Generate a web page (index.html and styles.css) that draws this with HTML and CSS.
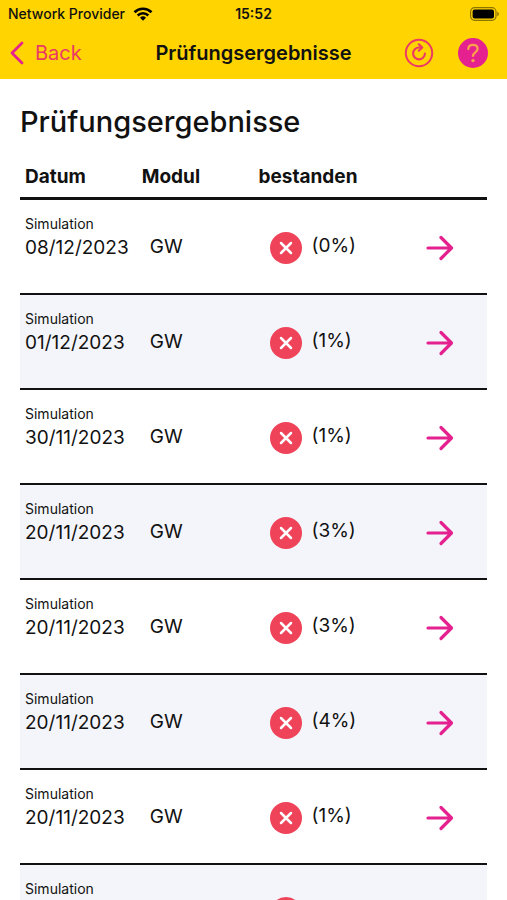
FILE: index.html
```html
<!DOCTYPE html>
<html lang="de">
<head>
    <meta charset="UTF-8">
    <meta name="viewport" content="width=device-width, initial-scale=1.0">
    <title>Prüfungsergebnisse</title>
    <link rel="stylesheet" href="styles.css">
</head>
<body>

    <svg class="sprite" aria-hidden="true">
        <symbol id="failed" viewBox="0 0 32 32">
            <circle cx="16" cy="16" r="16" fill="#ef4359"/>
            <path d="M11 11l10 10M21 11L11 21" stroke="#fff" stroke-width="2.5" stroke-linecap="round"/>
        </symbol>
        <symbol id="arrow" viewBox="0 0 28 26">
            <path d="M2 13h23M15 2.500l10.500 10.500-10.500 10.500" fill="none" stroke="#e4218f" stroke-width="3.200" stroke-linecap="round" stroke-linejoin="round"/>
        </symbol>
    </svg>

    <header>
        <div class="status-bar">
            <div class="carrier">
                <span>Network Provider</span>
                <svg width="20" height="14" viewBox="0 0 20 14" fill="none" stroke="#000">
                    <path d="M1.500 5.200a12.200 12.200 0 0 1 17 0" stroke-width="2.700"/>
                    <path d="M4.700 8.500a7.600 7.600 0 0 1 10.600 0" stroke-width="2.500"/>
                    <path d="M10 13.700L7 10.700a4.300 4.300 0 0 1 6 0z" fill="#000" stroke="none"/>
                </svg>
            </div>
            <div class="clock">15:52</div>
            <div class="battery">
                <svg width="30" height="14" viewBox="0 0 30 14">
                    <rect x="1.600" y="0.700" width="25.400" height="12.600" rx="4" fill="none" stroke="#000" stroke-opacity="0.450" stroke-width="1.200"/>
                    <rect x="3.600" y="2.600" width="21.400" height="8.800" rx="2"/>
                    <path d="M28.300 4.800v4.400q1.600-.8 1.600-2.200t-1.600-2.200z" fill-opacity="0.500"/>
                </svg>
            </div>
        </div>
        <nav class="nav-bar">
            <a class="back" href="#">
                <svg width="14" height="24" viewBox="0 0 14 24">
                    <path d="M12 2L2 12l10 10" fill="none" stroke="#e4218f" stroke-width="2.800" stroke-linecap="round" stroke-linejoin="round"/>
                </svg>
                <span>Back</span>
            </a>
            <div class="nav-title">Prüfungsergebnisse</div>
            <div class="actions">
                <button type="button" aria-label="Aktualisieren">
                    <svg width="30" height="30" viewBox="0 0 30 30" fill="none" stroke="#ec3a66" stroke-width="2">
                        <circle cx="15" cy="15" r="13.200"/>
                        <path d="M16 9.500h-1a5.900 5.900 0 1 0 5.900 6.200" stroke-width="2.200" stroke-linecap="round"/>
                        <path d="M14.800 6.300l3.400 3.200-3.400 3.200" stroke-width="2.200" stroke-linecap="round" stroke-linejoin="round"/>
                    </svg>
                </button>
                <button type="button" aria-label="Hilfe">
                    <svg width="30" height="30" viewBox="0 0 30 30">
                        <circle cx="15" cy="15" r="15" fill="#e4218f"/>
                        <path d="M10.300 11c.1-2.500 2-4.100 4.700-4.100s4.600 1.500 4.600 3.900c0 3.500-4.600 3.500-4.600 7.100" fill="none" stroke="#fb9f4a" stroke-width="2.300" stroke-linecap="round"/>
                        <circle cx="15" cy="22.600" r="1.700" fill="#fb9f4a"/>
                    </svg>
                </button>
            </div>
        </nav>
    </header>

    <main>
        <h1>Prüfungsergebnisse</h1>
        <table>
            <thead>
                <tr>
                    <th>Datum</th>
                    <th>Modul</th>
                    <th>bestanden</th>
                    <th></th>
                </tr>
            </thead>
            <tbody>
                <tr>
                    <td><small>Simulation</small>08/12/2023</td>
                    <td class="module">GW</td>
                    <td class="result"><div><svg><use href="#failed"/></svg><span>(0%)</span></div></td>
                    <td class="more"><a href="#" aria-label="Details"><svg><use href="#arrow"/></svg></a></td>
                </tr>
                <tr>
                    <td><small>Simulation</small>01/12/2023</td>
                    <td class="module">GW</td>
                    <td class="result"><div><svg><use href="#failed"/></svg><span>(1%)</span></div></td>
                    <td class="more"><a href="#" aria-label="Details"><svg><use href="#arrow"/></svg></a></td>
                </tr>
                <tr>
                    <td><small>Simulation</small>30/11/2023</td>
                    <td class="module">GW</td>
                    <td class="result"><div><svg><use href="#failed"/></svg><span>(1%)</span></div></td>
                    <td class="more"><a href="#" aria-label="Details"><svg><use href="#arrow"/></svg></a></td>
                </tr>
                <tr>
                    <td><small>Simulation</small>20/11/2023</td>
                    <td class="module">GW</td>
                    <td class="result"><div><svg><use href="#failed"/></svg><span>(3%)</span></div></td>
                    <td class="more"><a href="#" aria-label="Details"><svg><use href="#arrow"/></svg></a></td>
                </tr>
                <tr>
                    <td><small>Simulation</small>20/11/2023</td>
                    <td class="module">GW</td>
                    <td class="result"><div><svg><use href="#failed"/></svg><span>(3%)</span></div></td>
                    <td class="more"><a href="#" aria-label="Details"><svg><use href="#arrow"/></svg></a></td>
                </tr>
                <tr>
                    <td><small>Simulation</small>20/11/2023</td>
                    <td class="module">GW</td>
                    <td class="result"><div><svg><use href="#failed"/></svg><span>(4%)</span></div></td>
                    <td class="more"><a href="#" aria-label="Details"><svg><use href="#arrow"/></svg></a></td>
                </tr>
                <tr>
                    <td><small>Simulation</small>20/11/2023</td>
                    <td class="module">GW</td>
                    <td class="result"><div><svg><use href="#failed"/></svg><span>(1%)</span></div></td>
                    <td class="more"><a href="#" aria-label="Details"><svg><use href="#arrow"/></svg></a></td>
                </tr>
                <tr>
                    <td><small>Simulation</small></td>
                    <td class="module"></td>
                    <td class="result"><div><svg><use href="#failed"/></svg></div></td>
                    <td class="more"></td>
                </tr>
            </tbody>
        </table>
    </main>

</body>
</html>
```
FILE: styles.css
```css
* {
    box-sizing: border-box;
}
body {
    margin: 0;
    height: 100vh;
    display: flex;
    flex-direction: column;
    overflow: hidden;
    font-family: Inter, "Liberation Sans", sans-serif;
    font-size: 19px;
    color: #111;
    background-color: #fff;
}
svg {
    display: block;
    flex-shrink: 0;
}
.sprite {
    position: absolute;
    width: 0;
    height: 0;
}

/* Header */
header {
    flex-shrink: 0;
    background-color: #ffd400;
    color: #111;
}
.status-bar {
    display: grid;
    grid-template-columns: 1fr auto 1fr;
    align-items: center;
    height: 27px;
    padding: 0 8px;
    font-size: 14px;
    font-weight: 500;
}
.carrier {
    display: flex;
    align-items: center;
    gap: 8px;
}
.clock {
    font-weight: 600;
}
.battery {
    justify-self: end;
}
.nav-bar {
    display: grid;
    grid-template-columns: 1fr auto 1fr;
    align-items: center;
    height: 52px;
    padding: 0 19px;
    font-size: 20px;
}
.back {
    display: flex;
    align-items: center;
    gap: 11px;
    margin-left: -9px;
    color: #ec3a66;
    text-decoration: none;
}
.nav-title {
    font-weight: 600;
}
.actions {
    display: flex;
    justify-content: flex-end;
    gap: 24px;
}
.actions button {
    padding: 0;
    border: none;
    background: none;
    cursor: pointer;
}

/* Results */
main {
    flex: 1;
    min-height: 0;
    padding: 23px 20px 0;
    overflow: hidden;
}
h1 {
    margin: 0 0 13px;
    font-size: 29px;
    font-weight: 500;
    line-height: 40px;
}
table {
    width: 100%;
    table-layout: fixed;
    border-collapse: separate;
    border-spacing: 0;
}
th {
    height: 45px;
    padding: 0 5px;
    border-bottom: 3px solid #111;
    font-weight: 700;
    text-align: left;
}
td {
    height: 95px;
    padding: 13px 5px 0;
    border-bottom: 2px solid #111;
    line-height: 26px;
    vertical-align: top;
}
tbody tr:nth-child(even) {
    background-color: #f4f5fa;
}
small {
    display: block;
    font-size: 14px;
    line-height: 22px;
}
.module {
    padding: 34px 0 0 13px;
}
.result {
    padding: 32px 0 0 16px;
}
.result div {
    display: flex;
    gap: 10px;
}
.result svg {
    width: 32px;
    height: 32px;
}
.result span {
    line-height: 28px;
}
.more {
    padding: 35px 0 0 56px;
}
.more svg {
    width: 28px;
    height: 26px;
}
```
